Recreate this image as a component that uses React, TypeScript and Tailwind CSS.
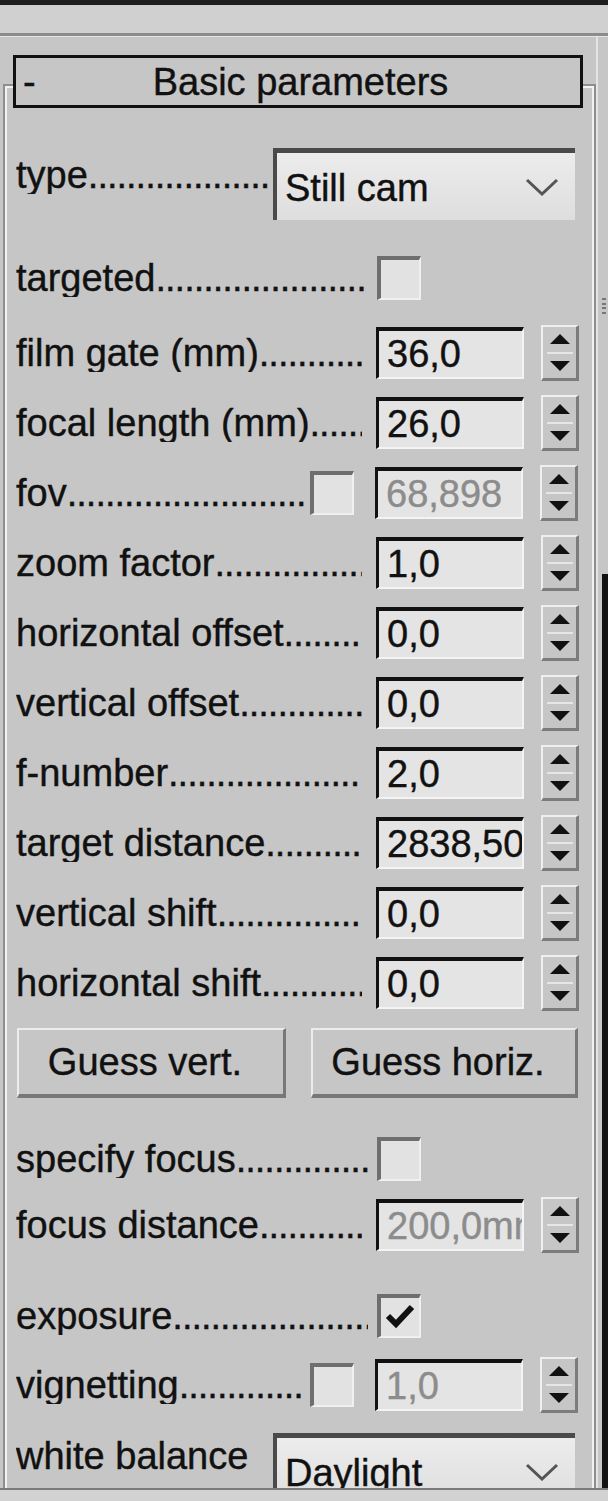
import React from 'react';

const Leader = ({ label, className, dots = true }: { label: string; className: string; dots?: boolean }) => (
    <div className={`flex shrink-0 overflow-hidden whitespace-nowrap ${className}`}>
        <span className="shrink-0">{label}</span>
        {dots && <span className="min-w-0 flex-1 overflow-hidden tracking-[-1px]">{'.'.repeat(60)}</span>}
    </div>
);

const Spinner = () => (
    <div className="ml-[17px] flex h-[56px] w-[38px] shrink-0 flex-col items-center justify-between border-t-2 border-l-2 border-t-[#efefef] border-l-[#efefef] border-r-[3px] border-b-[3px] border-r-[#7c7c7c] border-b-[#7c7c7c] bg-[#c6c6c6] py-[7px]">
        <svg width="20" height="10" viewBox="0 0 20 10">
            <polygon points="10,0 20,10 0,10" fill="#111" />
        </svg>
        <div className="h-[2px] w-[26px] bg-[#e6e6e6]" />
        <svg width="20" height="10" viewBox="0 0 20 10">
            <polygon points="0,0 20,0 10,10" fill="#111" />
        </svg>
    </div>
);

const Field = ({ value, disabled = false }: { value: string; disabled?: boolean }) => (
    <div className={`flex h-[52px] w-[148px] shrink-0 items-center overflow-hidden whitespace-nowrap border-t-4 border-l-[3px] border-t-[#111] border-l-[#111] border-r-2 border-b-2 border-r-[#f4f4f4] border-b-[#f4f4f4] bg-[#e4e4e4] pl-[8px] ${disabled ? 'text-[#8c8c8c]' : ''}`}>
        {value}
    </div>
);

const Check = ({ checked = false }: { checked?: boolean }) => (
    <div className="flex h-[44px] w-[44px] shrink-0 items-center justify-center border-t-4 border-l-4 border-t-[#6e6e6e] border-l-[#6e6e6e] border-r-2 border-b-2 border-r-[#f0f0f0] border-b-[#f0f0f0] bg-[#e2e2e2]">
        {checked && (
            <svg width="30" height="26" viewBox="0 0 30 26">
                <path d="M3 12 L11 20 L27 3" fill="none" stroke="#111" strokeWidth="6" />
            </svg>
        )}
    </div>
);

const Dropdown = ({ value }: { value: string }) => (
    <div className="ml-[5px] flex h-[72px] w-[302px] shrink-0 items-center justify-between border-t-[5px] border-l-4 border-t-[#4a4a4a] border-l-[#4a4a4a] bg-gradient-to-b from-[#ececec] to-[#dedede] pl-[8px] pr-[16px]">
        <span className="mt-[3px]">{value}</span>
        <svg width="34" height="18" viewBox="0 0 34 18">
            <path d="M2 2 L17 16 L32 2" fill="none" stroke="#555" strokeWidth="3" />
        </svg>
    </div>
);

const NumRow = ({ label, value, disabled }: { label: string; value: string; disabled?: boolean }) => (
    <div className="flex h-[70px] items-center pl-[9px]">
        <Leader label={label} className="w-[346px]" />
        <div className="ml-[14px]">
            <Field value={value} disabled={disabled} />
        </div>
        <Spinner />
    </div>
);

const CheckNumRow = ({ label, value, h }: { label: string; value: string; h: string }) => (
    <div className={`flex items-center pl-[9px] ${h}`}>
        <Leader label={label} className="w-[289px]" />
        <div className="ml-[5px]">
            <Check />
        </div>
        <div className="ml-[21px]">
            <Field value={value} disabled />
        </div>
        <Spinner />
    </div>
);

const CheckRow = ({ label, checked, className }: { label: string; checked?: boolean; className: string }) => (
    <div className={`flex items-center pl-[9px] ${className}`}>
        <Leader label={label} className="w-[352px]" />
        <div className="ml-[9px]">
            <Check checked={checked} />
        </div>
    </div>
);

const Button = ({ label, className }: { label: string; className: string }) => (
    <div className={`flex h-[70px] items-center justify-center border-t-2 border-l-2 border-t-[#ececec] border-l-[#ececec] border-r-[3px] border-b-4 border-r-[#787878] border-b-[#787878] pr-[12px] ${className}`}>
        {label}
    </div>
);

export default function App() {
    return (
        <div className="flex h-[1501px] w-[608px] flex-col overflow-hidden bg-[#c6c6c6] font-['Liberation_Sans',Arial,sans-serif] text-[38px] leading-none text-[#111] [-webkit-text-stroke:0.4px_currentColor]">
            {/* title strip */}
            <div className="h-[5px] bg-[#1e1e1e]" />
            <div className="h-[28px] bg-[#d0d0d0]" />
            <div className="h-[3px] bg-[#8c8c8c]" />
            <div className="h-px bg-[#e6e6e6]" />

            <div className="flex h-[1451px] overflow-hidden">
                <div className="w-[3px] shrink-0" />

                {/* rollout frame */}
                <div className="mt-[47px] flex w-[593px] shrink-0 flex-col border-t-2 border-l-2 border-r-2 border-[#8e8e8e]">
                    <div className="flex flex-1 flex-col border-t-2 border-l-2 border-r-2 border-[#f2f2f2]">
                        {/* header */}
                        <div className="-mt-[33px] ml-[6px] flex h-[53px] w-[570px] shrink-0 items-center border-[3px] border-[#111] bg-[#c6c6c6]">
                            <span className="ml-[7px] w-[20px]">-</span>
                            <span className="flex-1 pr-[22px] text-center">Basic parameters</span>
                        </div>

                        <div className="mt-[40px] flex items-start pl-[9px]">
                            <Leader label="type" className="mt-[8px] w-[252px]" />
                            <Dropdown value="Still cam" />
                        </div>

                        <CheckRow label="targeted" className="mt-[23px] h-[70px]" />

                        <div className="mt-[5px]">
                            <NumRow label="film gate (mm)" value="36,0" />
                            <NumRow label="focal length (mm)" value="26,0" />
                            <CheckNumRow label="fov" value="68,898" h="h-[70px]" />
                            <NumRow label="zoom factor" value="1,0" />
                            <NumRow label="horizontal offset" value="0,0" />
                            <NumRow label="vertical offset" value="0,0" />
                            <NumRow label="f-number" value="2,0" />
                            <NumRow label="target distance" value="2838,50mm" />
                            <NumRow label="vertical shift" value="0,0" />
                            <NumRow label="horizontal shift" value="0,0" />
                        </div>

                        <div className="mt-[10px] flex pl-[10px]">
                            <Button label="Guess vert." className="w-[269px]" />
                            <Button label="Guess horiz." className="ml-[25px] w-[267px]" />
                        </div>

                        <CheckRow label="specify focus" className="mt-[28px] h-[66px]" />
                        <div className="flex h-[66px] items-center pl-[9px]">
                            <Leader label="focus distance" className="w-[346px]" />
                            <div className="ml-[14px]">
                                <Field value="200,0mm" disabled />
                            </div>
                            <Spinner />
                        </div>

                        <CheckRow label="exposure" checked className="mt-[25px] h-[66px]" />
                        <div className="mt-[3px]">
                            <CheckNumRow label="vignetting" value="1,0" h="h-[66px]" />
                        </div>

                        <div className="mt-[15px] flex items-start pl-[9px]">
                            <Leader label="white balance" dots={false} className="mt-[4px] w-[252px]" />
                            <Dropdown value="Daylight" />
                        </div>
                    </div>
                </div>

                {/* scrollbar strip */}
                <div className="flex flex-1 flex-col border-l-2 border-[#e4e4e4] pl-[4px]">
                    <div className="h-[261px]" />
                    <div className="flex h-[16px] flex-col justify-between">
                        <div className="h-[2px] w-[4px] bg-[#777]" />
                        <div className="h-[2px] w-[4px] bg-[#777]" />
                        <div className="h-[2px] w-[4px] bg-[#777]" />
                        <div className="h-[2px] w-[4px] bg-[#777]" />
                    </div>
                    <div className="h-[260px]" />
                    <div className="flex-1 bg-[#111]" />
                </div>
            </div>

            <div className="h-[2px] bg-[#7a7a7a]" />
            <div className="flex-1 bg-[#d2d2d2]" />
        </div>
    );
}
